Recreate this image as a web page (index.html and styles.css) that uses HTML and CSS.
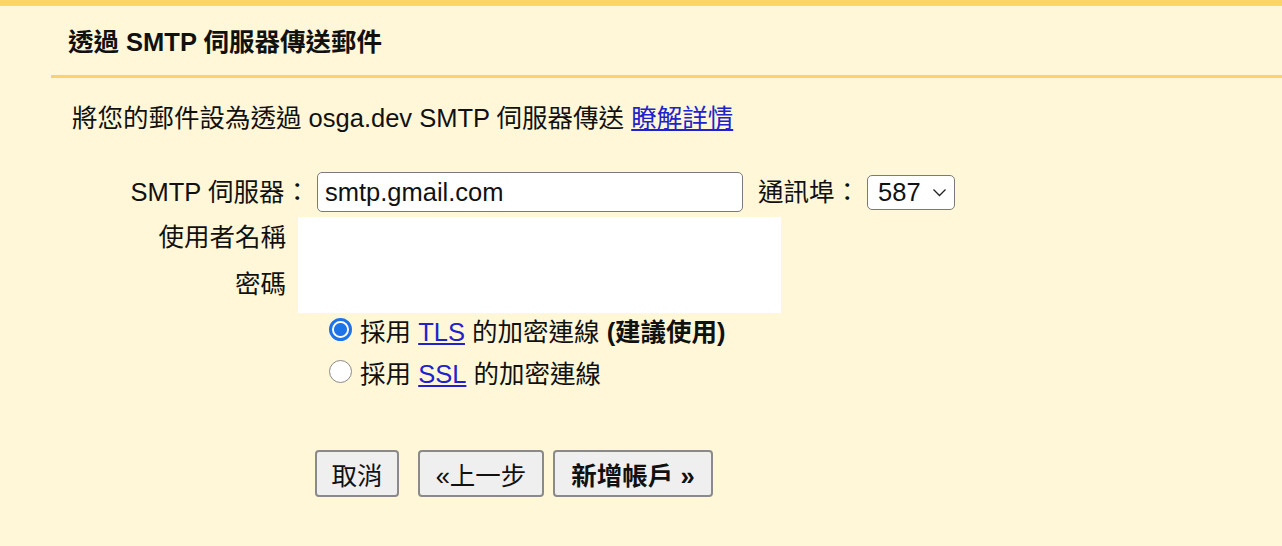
FILE: index.html
```html
<!DOCTYPE html>
<html lang="zh-Hant">
<head>
<meta charset="utf-8">
<title>透過 SMTP 伺服器傳送郵件</title>
<link rel="stylesheet" href="styles.css">
</head>
<body>
<div class="topbar"></div>
<div class="panel">
  <h1 class="title">透過 SMTP 伺服器傳送郵件</h1>
  <p class="desc">將您的郵件設為透過 osga.dev SMTP 伺服器傳送 <a href="#" class="link">瞭解詳情</a></p>

  <div class="form">
    <div class="row-server">
      <label class="label label-server">SMTP 伺服器：</label>
      <input class="text-input" type="text" value="smtp.gmail.com">
      <span class="port-label">通訊埠：</span>
      <div class="select">
        <span>587</span>
        <svg class="chev" width="15" height="9" viewBox="0 0 15 9"><path d="M1.5 1.5 L7.5 7.5 L13.5 1.5" fill="none" stroke="#222" stroke-width="1.3"/></svg>
      </div>
    </div>

    <div class="cred">
      <div class="cred-labels">
        <span class="label">使用者名稱</span>
        <span class="label">密碼</span>
      </div>
      <div class="cred-box"></div>
    </div>

    <div class="options">
      <label class="option"><input type="radio" name="sec" class="radio" checked> 採用 <a href="#" class="link">TLS</a> 的加密連線 <b>(建議使用)</b></label>
      <label class="option"><input type="radio" name="sec" class="radio"> 採用 <a href="#" class="link">SSL</a> 的加密連線</label>
    </div>

    <div class="buttons">
      <button class="btn btn-cancel">取消</button>
      <button class="btn btn-back">«上一步</button>
      <button class="btn btn-add">新增帳戶 »</button>
    </div>
  </div>
</div>
</body>
</html>
```

FILE: styles.css
```css
html, body {
  margin: 0;
  padding: 0;
  background: #fff7d8;
  height: 100%;
}

body {
  font-family: "Liberation Sans", "Noto Sans CJK TC", sans-serif;
  font-size: 25.5px;
  line-height: 30px;
  color: #111;
}

.topbar {
  height: 6px;
  background: #fdd466;
}

.panel {
  margin-left: 51px;
}

.title {
  margin: 0;
  height: 69px;
  padding-left: 17px;
  font-size: 25.5px;
  font-weight: bold;
  line-height: 72px;
  border-bottom: 3px solid #fcd36a;
  box-sizing: content-box;
}

.desc {
  margin: 25px 0 0 21px;
}

.link {
  color: #2222cc;
  text-decoration: underline;
}

.form {
  margin-top: 39px;
}

.row-server {
  display: flex;
  align-items: center;
  height: 40px;
}

.label {
  display: block;
  text-align: right;
  white-space: nowrap;
}

.label-server {
  width: 259px;
}

.text-input {
  margin-left: 7px;
  width: 426px;
  height: 40px;
  box-sizing: border-box;
  border: 1.5px solid #7a7a7a;
  border-radius: 5px;
  background: #fff;
  font-family: inherit;
  font-size: 25.5px;
  padding: 0 7px;
  color: #111;
}

.port-label {
  margin-left: 15px;
}

.select {
  margin-left: 7px;
  width: 88px;
  height: 35px;
  box-sizing: border-box;
  border: 1.5px solid #7a7a7a;
  border-radius: 5px;
  background: #fff;
  display: flex;
  align-items: center;
  justify-content: space-between;
  padding: 0 7px 0 10px;
}

.chev {
  display: block;
  margin-top: 1px;
}

.cred {
  display: flex;
  margin-top: 5px;
}

.cred-labels {
  width: 235px;
  display: flex;
  flex-direction: column;
  padding-top: 5px;
  gap: 17px;
}

.cred-box {
  margin-left: 12px;
  width: 483px;
  height: 96px;
  background: #fff;
}

.options {
  margin-left: 278px;
  margin-top: 4px;
  display: flex;
  flex-direction: column;
  gap: 12px;
}

.option {
  display: flex;
  align-items: center;
  white-space: pre;
}

.radio {
  appearance: none;
  -webkit-appearance: none;
  margin: 0 1px 0 0;
  width: 23px;
  height: 23px;
  border-radius: 50%;
  border: 1.5px solid #8a8a8a;
  background: #fff;
  box-sizing: border-box;
  position: relative;
  top: -3px;
}

.radio:checked {
  border: 3px solid #1e73e8;
  background: radial-gradient(circle, #1e73e8 0 6px, #fff 7px);
}

.buttons {
  margin-top: 61px;
  margin-left: 264px;
  display: flex;
}

.btn {
  height: 47px;
  box-sizing: border-box;
  border: 2px solid #8a8a8a;
  border-radius: 4px;
  background: #efefef;
  font-family: inherit;
  font-size: 25.5px;
  color: #111;
  padding: 0;
}

.btn-cancel {
  width: 84px;
}

.btn-back {
  margin-left: 19px;
  width: 126px;
}

.btn-add {
  margin-left: 9px;
  width: 160px;
  font-weight: bold;
}
```
